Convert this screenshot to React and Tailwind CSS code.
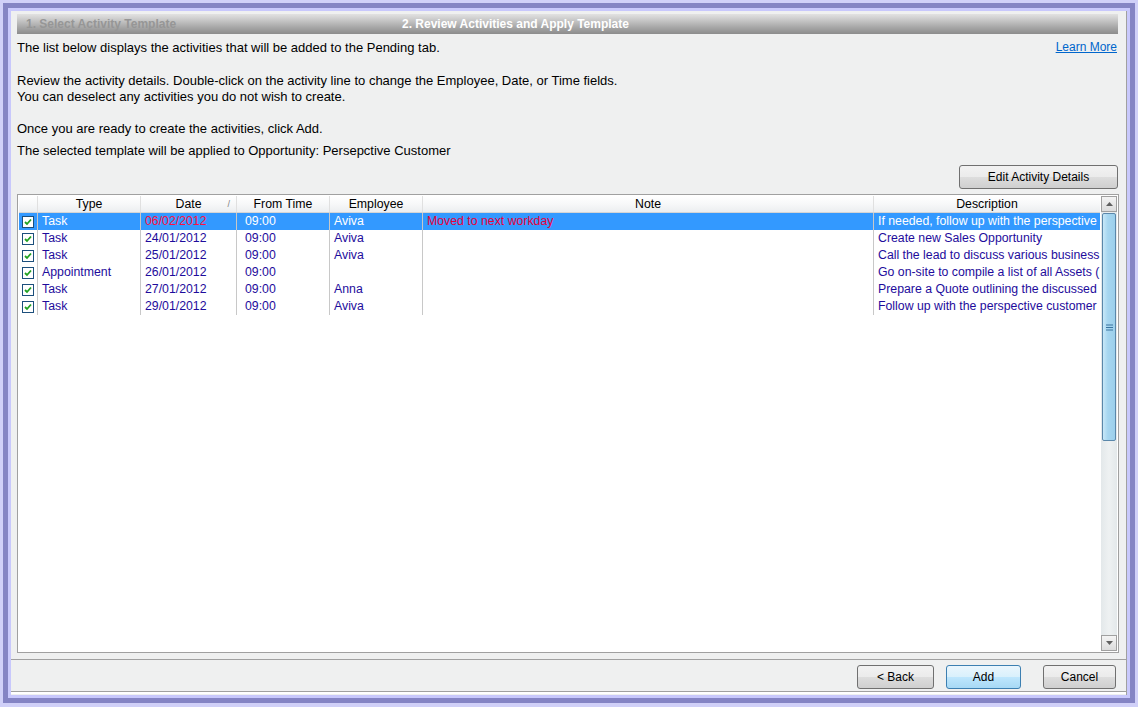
import React from 'react';

const rows = [
    { type: 'Task', date: '06/02/2012', time: '09:00', employee: 'Aviva', note: 'Moved to next workday', description: 'If needed, follow up with the perspective customer', selected: true },
    { type: 'Task', date: '24/01/2012', time: '09:00', employee: 'Aviva', note: '', description: 'Create new Sales Opportunity' },
    { type: 'Task', date: '25/01/2012', time: '09:00', employee: 'Aviva', note: '', description: 'Call the lead to discuss various business needs' },
    { type: 'Appointment', date: '26/01/2012', time: '09:00', employee: '', note: '', description: 'Go on-site to compile a list of all Assets (hardware)' },
    { type: 'Task', date: '27/01/2012', time: '09:00', employee: 'Anna', note: '', description: 'Prepare a Quote outlining the discussed items' },
    { type: 'Task', date: '29/01/2012', time: '09:00', employee: 'Aviva', note: '', description: 'Follow up with the perspective customer' },
];

const Check = () => (
    <span className="flex h-[12px] w-[12px] items-center justify-center border border-[#1c4f7c] bg-white">
        <svg width="8" height="8" viewBox="0 0 8 8">
            <path d="M1 4 L3 6 L7 1.5" fill="none" stroke="#21a121" strokeWidth="1.8" />
        </svg>
    </span>
);

const WinButton = ({ children, width, primary }) => (
    <button
        className={`flex h-[24px] items-center justify-center rounded-[3px] border text-[12px] text-black ${primary ? 'border-[#3c7fb1] bg-[linear-gradient(#eaf6fd,#d9f0fc_50%,#bee6fd_51%,#a7d9f5)]' : 'border-[#707070] bg-[linear-gradient(#f2f2f2,#ebebeb_50%,#dddddd_51%,#cfcfcf)]'}`}
        style={{ width }}
    >
        {children}
    </button>
);

const Arrow = ({ up }) => (
    <div className="flex h-[16px] w-[16px] items-center justify-center border border-[#a0a0a0] bg-[linear-gradient(#f4f4f4,#dcdcdc)]">
        <svg width="7" height="4" viewBox="0 0 7 4">
            <path d={up ? 'M0 4 L3.5 0 L7 4 Z' : 'M0 0 L3.5 4 L7 0 Z'} fill="#606060" />
        </svg>
    </div>
);

const App = () => {
    const cellText = 'text-[12.3px] leading-[17px] whitespace-nowrap overflow-hidden';
    return (
        <div className="h-[707px] w-[1138px] bg-[#d0d0f8] pt-[3px] pl-[3px] font-['Liberation_Sans',Arial,sans-serif]">
            <div className="h-[700px] w-[1132px] bg-[#8484c4] p-[5px]">
                <div className="h-[690px] w-[1122px] bg-[#c8c8fc] pt-[3px] pl-[3px] pr-[3px] pb-[3px]">
                    <div className="flex h-[684px] w-[1116px] flex-col border-r border-[#a0a0a0] bg-[#eff0f0]">
                        <div className="ml-[6px] mt-[3px] flex h-[20px] w-[1101px] items-center bg-[linear-gradient(#e2e2e2,#c8c8c8_30%,#a8a8a8_65%,#8c8c8c)] pl-[9px] text-[12px] font-bold">
                            <span className="w-[376px] text-[#969696]">1. Select Activity Template</span>
                            <span className="text-white">2. Review Activities and Apply Template</span>
                        </div>

                        <div className="ml-[6px] mr-[9px] mt-[6px] text-[13px] leading-[16px] text-black">
                            <div className="flex items-center justify-between">
                                <span>The list below displays the activities that will be added to the Pending tab.</span>
                                <a className="-mt-[3px] text-[12px] text-[#0066cc] underline">Learn More</a>
                            </div>
                            <div className="mt-[17px]">Review the activity details. Double-click on the activity line to change the Employee, Date, or Time fields.</div>
                            <div>You can deselect any activities you do not wish to create.</div>
                            <div className="mt-[16px]">Once you are ready to create the activities, click Add.</div>
                            <div className="mt-[6px]">The selected template will be applied to Opportunity: Persepctive Customer</div>
                        </div>

                        <div className="mr-[8px] mt-[6px] flex justify-end">
                            <WinButton width={159}>Edit Activity Details</WinButton>
                        </div>

                        <div className="ml-[6px] mt-[5px] flex h-[459px] w-[1102px] border border-[#a0a0a0] bg-white p-[1px]">
                            <div className="flex w-[1081px] flex-col">
                                <div className="flex h-[17px] border-b border-[#d5d5d5] bg-[linear-gradient(#ffffff,#f7f8f9_50%,#eceef0)] text-[12.3px] leading-[16px] text-black">
                                    <div className="w-[19px] border-r border-[#e0e0e0]" />
                                    <div className="w-[103px] border-r border-[#e0e0e0] text-center">Type</div>
                                    <div className="relative w-[96px] border-r border-[#e0e0e0] text-center">
                                        Date
                                        <span className="absolute right-[6px] top-0 text-[9px] text-[#808080]">/</span>
                                    </div>
                                    <div className="w-[93px] border-r border-[#e0e0e0] text-center">From Time</div>
                                    <div className="w-[93px] border-r border-[#e0e0e0] text-center">Employee</div>
                                    <div className="w-[451px] border-r border-[#e0e0e0] text-center">Note</div>
                                    <div className="w-[226px] text-center">Description</div>
                                </div>
                                {rows.map((r, i) => {
                                    const txt = r.selected ? 'text-white' : 'text-[#1e0c9c]';
                                    return (
                                        <div key={i} className={`flex h-[17px] ${r.selected ? 'bg-[#3399ff]' : ''}`}>
                                            <div className="flex w-[19px] items-center justify-center border-r border-[#c8c8c8]">
                                                <Check />
                                            </div>
                                            <div className={`w-[103px] border-r border-[#c8c8c8] pl-[4px] ${cellText} ${txt}`}>{r.type}</div>
                                            <div className={`w-[96px] border-r border-[#c8c8c8] pl-[4px] ${cellText} ${r.selected ? 'text-[#ff1040]' : 'text-[#1e0c9c]'}`}>{r.date}</div>
                                            <div className={`w-[93px] border-r border-[#c8c8c8] pl-[8px] ${cellText} ${txt}`}>{r.time}</div>
                                            <div className={`w-[93px] border-r border-[#c8c8c8] pl-[4px] ${cellText} ${txt}`}>{r.employee}</div>
                                            <div className={`w-[451px] border-r border-[#c8c8c8] pl-[4px] ${cellText} text-[#e8003a]`}>{r.note}</div>
                                            <div className={`w-[226px] pl-[4px] ${cellText} ${txt}`}>{r.description}</div>
                                        </div>
                                    );
                                })}
                            </div>
                            <div className="ml-[1px] flex w-[17px] flex-col bg-[linear-gradient(90deg,#e3e8ea,#eef1f2_50%,#e3e8ea)]">
                                <Arrow up />
                                <div className="mx-[1px] mt-[1px] flex h-[228px] items-center justify-center rounded-[2px] border border-[#5a87aa] bg-[linear-gradient(90deg,#c8e8f8,#a6d6f0_40%,#9ccfeb)]">
                                    <svg width="7" height="7" viewBox="0 0 7 7">
                                        <path d="M0 1 H7 M0 3.5 H7 M0 6 H7" stroke="#3a74a0" strokeWidth="1" />
                                    </svg>
                                </div>
                                <div className="flex-1" />
                                <Arrow />
                            </div>
                        </div>

                        <div className="mt-[6px] border-t border-[#a0a0a0]" />

                        <div className="mr-[10px] mt-[5px] flex justify-end">
                            <WinButton width={77}>&lt; Back</WinButton>
                            <div className="ml-[12px]">
                                <WinButton width={75} primary>Add</WinButton>
                            </div>
                            <div className="ml-[22px]">
                                <WinButton width={73}>Cancel</WinButton>
                            </div>
                        </div>

                        <div className="mt-[2px] h-[3px] border-t border-[#a0a0a0] bg-white" />
                    </div>
                </div>
            </div>
        </div>
    );
};

export default App;
